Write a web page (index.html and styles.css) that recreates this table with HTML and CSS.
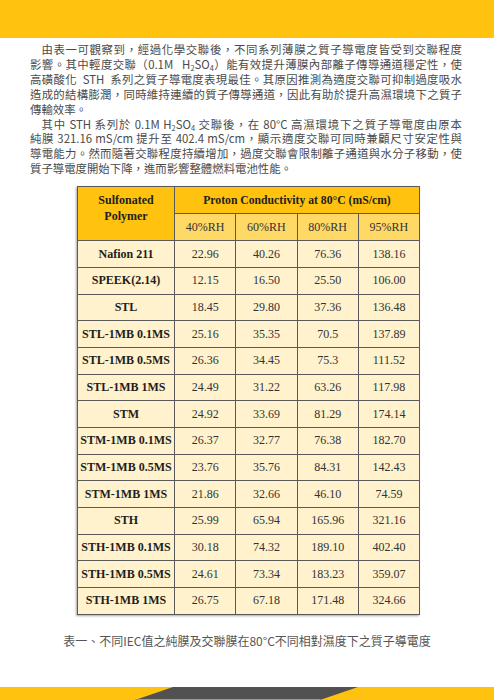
FILE: index.html
```html
<!DOCTYPE html>
<html lang="zh-TW">
<head>
    <meta charset="UTF-8">
    <meta name="viewport" content="width=device-width, initial-scale=1.0">
    <title>質子導電度</title>
    <link rel="stylesheet" href="styles.css">
</head>
<body>
    <div class="top-bar"></div>

    <div class="article">
        <p>
            <span class="line first">由表一可觀察到，經過化學交聯後，不同系列薄膜之質子導電度皆受到交聯程度</span>
            <span class="line">影響。其中輕度交聯（0.1M&nbsp;&nbsp;&nbsp;H<sub>2</sub>SO<sub>4</sub>）能有效提升薄膜內部離子傳導通道穩定性，使</span>
            <span class="line">高磺酸化&nbsp;&nbsp;STH&nbsp;&nbsp;系列之質子導電度表現最佳。其原因推測為適度交聯可抑制過度吸水</span>
            <span class="line">造成的結構膨潤，同時維持連續的質子傳導通道，因此有助於提升高濕環境下之質子</span>
            傳輸效率。
        </p>
        <p>
            <span class="line first">其中 STH 系列於 0.1M H<sub>2</sub>SO<sub>4</sub> 交聯後，在 80°C 高濕環境下之質子導電度由原本</span>
            <span class="line">純膜 321.16 mS/cm 提升至 402.4 mS/cm，顯示適度交聯可同時兼顧尺寸安定性與</span>
            <span class="line">導電能力。然而隨著交聯程度持續增加，過度交聯會限制離子通道與水分子移動，使</span>
            質子導電度開始下降，進而影響整體燃料電池性能。
        </p>
    </div>

    <table class="data-table">
        <colgroup>
            <col class="col-name">
            <col class="col-val">
            <col class="col-val">
            <col class="col-val">
            <col class="col-val">
        </colgroup>
        <thead>
            <tr class="head-main">
                <th rowspan="2" class="polymer-head">Sulfonated<br>Polymer</th>
                <th colspan="4" class="conduct-head">Proton Conductivity at 80°C (mS/cm)</th>
            </tr>
            <tr class="head-sub">
                <th>40%RH</th>
                <th>60%RH</th>
                <th>80%RH</th>
                <th>95%RH</th>
            </tr>
        </thead>
        <tbody>
            <tr><th>Nafion 211</th><td>22.96</td><td>40.26</td><td>76.36</td><td>138.16</td></tr>
            <tr><th>SPEEK(2.14)</th><td>12.15</td><td>16.50</td><td>25.50</td><td>106.00</td></tr>
            <tr><th>STL</th><td>18.45</td><td>29.80</td><td>37.36</td><td>136.48</td></tr>
            <tr><th>STL-1MB 0.1MS</th><td>25.16</td><td>35.35</td><td>70.5</td><td>137.89</td></tr>
            <tr><th>STL-1MB 0.5MS</th><td>26.36</td><td>34.45</td><td>75.3</td><td>111.52</td></tr>
            <tr><th>STL-1MB 1MS</th><td>24.49</td><td>31.22</td><td>63.26</td><td>117.98</td></tr>
            <tr><th>STM</th><td>24.92</td><td>33.69</td><td>81.29</td><td>174.14</td></tr>
            <tr><th>STM-1MB 0.1MS</th><td>26.37</td><td>32.77</td><td>76.38</td><td>182.70</td></tr>
            <tr><th>STM-1MB 0.5MS</th><td>23.76</td><td>35.76</td><td>84.31</td><td>142.43</td></tr>
            <tr><th>STM-1MB 1MS</th><td>21.86</td><td>32.66</td><td>46.10</td><td>74.59</td></tr>
            <tr><th>STH</th><td>25.99</td><td>65.94</td><td>165.96</td><td>321.16</td></tr>
            <tr><th>STH-1MB 0.1MS</th><td>30.18</td><td>74.32</td><td>189.10</td><td>402.40</td></tr>
            <tr><th>STH-1MB 0.5MS</th><td>24.61</td><td>73.34</td><td>183.23</td><td>359.07</td></tr>
            <tr><th>STH-1MB 1MS</th><td>26.75</td><td>67.18</td><td>171.48</td><td>324.66</td></tr>
        </tbody>
    </table>

    <p class="caption">表一、不同IEC值之純膜及交聯膜在80°C不同相對濕度下之質子導電度</p>

    <div class="bottom-band">
        <svg width="494" height="13" viewBox="0 0 494 13" preserveAspectRatio="none">
            <polygon points="173,0 358,0 320,13 135,13" fill="#515151"/>
            <polygon points="138,12 321,12 320,13 135,13" fill="#9a9a9a"/>
        </svg>
    </div>
</body>
</html>
```

FILE: styles.css
```css
* {
    box-sizing: border-box;
}

body {
    margin: 0;
    width: 494px;
    height: 700px;
    background: #fff;
    display: flex;
    flex-direction: column;
    overflow: hidden;
}

.top-bar {
    height: 38px;
    background-color: #ffc20e;
    flex-shrink: 0;
}

.article {
    width: 432px;
    margin: 4px 0 0 30px;
    font-family: "Noto Sans CJK TC", "Noto Sans", sans-serif;
    font-size: 11.4px;
    line-height: 14.9px;
    color: #4a4a4a;
}

.article p {
    margin: 0;
}

.article .line {
    display: block;
    white-space: nowrap;
    text-align: justify;
    text-align-last: justify;
}

.article .line.first {
    text-indent: 1em;
}

.article sub {
    font-size: 0.65em;
    line-height: 0;
    vertical-align: -0.25em;
}

.data-table {
    width: 343px;
    margin: 10px 0 0 77px;
    border-collapse: collapse;
    table-layout: fixed;
    font-family: "Liberation Serif", "Times New Roman", serif;
    box-shadow: -1px 1px 2px rgba(0, 0, 0, 0.35);
}

.col-name {
    width: 97px;
}

.data-table th,
.data-table td {
    border: 1px solid #5a5a5a;
    text-align: center;
    padding: 0;
    height: 26.7px;
}

.data-table th {
    font-size: 12px;
    font-weight: bold;
    color: #1e1e1e;
    white-space: nowrap;
}

.data-table td {
    font-size: 12px;
    color: #333;
    background-color: #fff2cc;
}

.data-table tbody th {
    background-color: #fff2cc;
}

.head-main th {
    background-color: #ffc20e;
    height: 27px;
}

.head-sub th {
    background-color: #ffd966;
    font-weight: normal;
    color: #333;
    height: 27px;
}

.polymer-head {
    line-height: 16px;
    padding-bottom: 12px !important;
}

.conduct-head {
    font-size: 11.7px !important;
}

.caption {
    margin: 17px 0 0;
    text-align: center;
    font-family: "Noto Sans CJK TC", "Noto Sans", sans-serif;
    font-size: 12px;
    color: #555;
}

.bottom-band {
    margin-top: auto;
    height: 13px;
    background-color: #ffc20e;
    flex-shrink: 0;
}

.bottom-band svg {
    display: block;
}
```
